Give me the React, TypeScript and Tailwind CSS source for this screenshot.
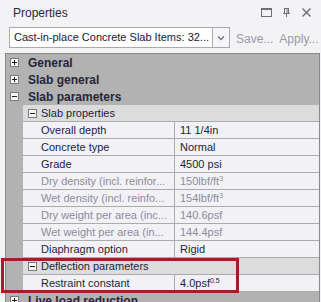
import React from "react";

const F = { fontFamily: '"Liberation Sans", Arial, sans-serif' };

function PlusMinus({ plus }: { plus: boolean }) {
  return (
    <svg width="9" height="9" viewBox="0 0 9 9" className="shrink-0">
      <rect x="0.5" y="0.5" width="8" height="8" fill="#f8f8f8" stroke="#7a7a7a" />
      <line x1="2" y1="4.5" x2="7" y2="4.5" stroke="#1e1e2e" />
      {plus && <line x1="4.5" y1="2" x2="4.5" y2="7" stroke="#1e1e2e" />}
    </svg>
  );
}

function Category({ label, plus }: { label: string; plus: boolean }) {
  return (
    <div className="h-[17px] flex items-center pl-[4px] gap-[9px]">
      <PlusMinus plus={plus} />
      <span className="font-bold text-[12px] text-[#26263a] whitespace-nowrap">{label}</span>
    </div>
  );
}

function SubCategory({ label }: { label: string }) {
  return (
    <div className="h-[17px] flex">
      <div className="w-[17px] shrink-0" />
      <div className="flex-1 bg-[#dcdcdc] border-b border-[#ababab] flex items-center pl-[5px] gap-[4px]">
        <PlusMinus plus={false} />
        <span className="text-[11px] text-[#1e1e3a]">{label}</span>
      </div>
    </div>
  );
}

function Prop({ name, value, dim }: { name: string; value: React.ReactNode; dim?: boolean }) {
  const c = dim ? "text-[#8c8c9c]" : "text-[#1e1e3a]";
  return (
    <div className="h-[17px] flex">
      <div className="w-[17px] shrink-0" />
      <div className="flex-1 bg-[#f2f2f6] border-b border-[#ababab] flex">
        <div className={`w-[152px] shrink-0 border-r border-[#ababab] pl-[18px] flex items-center text-[11px] whitespace-nowrap overflow-hidden ${c}`}>
          {name}
        </div>
        <div className={`flex-1 pl-[5px] flex items-center text-[11px] whitespace-nowrap ${c}`}>{value}</div>
      </div>
    </div>
  );
}

export default function App() {
  return (
    <div className="w-[321px] h-[302px] bg-[#f3f3f6] overflow-hidden relative" style={F}>
      {/* title */}
      <div className="h-[25px] flex items-center pl-[13px] pr-[9px]">
        <span className="text-[12px] text-[#2a2a3a] flex-1">Properties</span>
        <div className="flex items-center gap-[9px] text-[#6e6e78]">
          <svg width="11" height="11" viewBox="0 0 11 11">
            <rect x="0.5" y="1.5" width="10" height="8" fill="none" stroke="#6e6e78" />
            <line x1="0" y1="2.5" x2="11" y2="2.5" stroke="#6e6e78" />
          </svg>
          <svg width="11" height="11" viewBox="0 0 11 11">
            <rect x="3.5" y="1.5" width="4" height="5" fill="none" stroke="#6e6e78" />
            <line x1="6" y1="2" x2="6" y2="6" stroke="#6e6e78" />
            <line x1="2" y1="6.5" x2="9" y2="6.5" stroke="#6e6e78" />
            <line x1="5.5" y1="7" x2="5.5" y2="10" stroke="#6e6e78" />
          </svg>
          <svg width="11" height="11" viewBox="0 0 11 11">
            <path d="M1.5 1.5 L9.5 9.5 M9.5 1.5 L1.5 9.5" stroke="#6e6e78" strokeWidth="1.4" />
          </svg>
        </div>
      </div>
      {/* toolbar */}
      <div className="h-[28px] flex items-start pl-[9px] pt-[2px]">
        <div className="w-[221px] h-[21px] border border-[#a9a9b0] bg-white flex">
          <div className="flex-1 flex items-center pl-[4px] text-[11px] text-[#202030] whitespace-nowrap overflow-hidden">
            Cast-in-place Concrete Slab Items: 32...
          </div>
          <div className="w-[17px] border-l border-[#a9a9b0] flex items-center justify-center bg-[#f6f6f8]">
            <svg width="8" height="6" viewBox="0 0 8 6">
              <path d="M1 1.5 L4 4.5 L7 1.5" fill="none" stroke="#707078" strokeWidth="1.3" />
            </svg>
          </div>
        </div>
        <span className="ml-[6px] mt-[3px] text-[12px] text-[#9a9aa6]">Save...</span>
        <span className="ml-[6px] mt-[3px] text-[12px] text-[#9a9aa6]">Apply...</span>
      </div>
      {/* grid */}
      <div className="absolute left-[5px] top-[53px] w-[315px] h-[260px] bg-[#b2b2b2] border-l border-t border-r border-[#8a8a8a]">
        <Category label="General" plus />
        <Category label="Slab general" plus />
        <Category label="Slab parameters" plus={false} />
        <SubCategory label="Slab properties" />
        <Prop name="Overall depth" value="11 1/4in" />
        <Prop name="Concrete type" value="Normal" />
        <Prop name="Grade" value="4500 psi" />
        <Prop name="Dry density (incl. reinfor..." value={<span>150lbf/ft<sup className="text-[7px] -top-[4px]">3</sup></span>} dim />
        <Prop name="Wet density (incl. reinfo..." value={<span>154lbf/ft<sup className="text-[7px] -top-[4px]">3</sup></span>} dim />
        <Prop name="Dry weight per area (inc..." value="140.6psf" dim />
        <Prop name="Wet weight per area (in..." value="144.4psf" dim />
        <Prop name="Diaphragm option" value="Rigid" />
        <SubCategory label="Deflection parameters" />
        <Prop name="Restraint constant" value={<span>4.0psf<sup className="text-[7px] -top-[4px]">0.5</sup></span>} />
        <Category label="Live load reduction" plus />
      </div>
      {/* highlight */}
      <div className="absolute left-[1px] top-[258px] w-[238px] h-[35px] border-[3px] border-[#a31d2b]" />
    </div>
  );
}
